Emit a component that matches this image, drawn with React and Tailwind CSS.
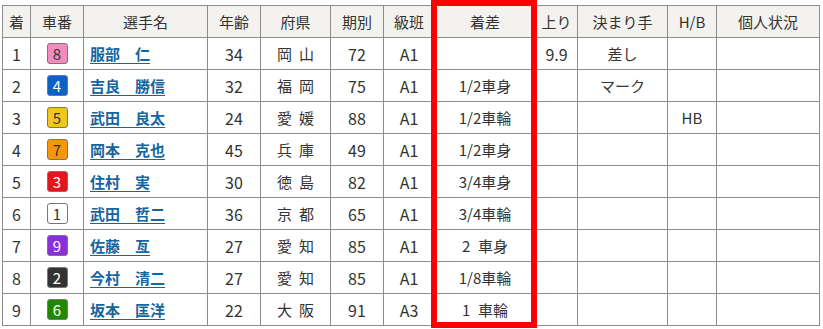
const COLS = [
  { label: '着', w: 28 },
  { label: '車番', w: 53 },
  { label: '選手名', w: 124 },
  { label: '年齢', w: 53 },
  { label: '府県', w: 70 },
  { label: '期別', w: 53 },
  { label: '級班', w: 51 },
  { label: '着差', w: 101 },
  { label: '上り', w: 42 },
  { label: '決まり手', w: 90 },
  { label: 'H/B', w: 49 },
  { label: '個人状況', w: 103 },
];

const BADGE = {
  1: 'bg-white text-[#333]',
  2: 'bg-[#333333] text-white',
  3: 'bg-[#e8141c] text-white',
  4: 'bg-[#0a62c9] text-white',
  5: 'bg-[#f2c71d] text-[#333]',
  6: 'bg-[#1f8a00] text-white',
  7: 'bg-[#f7960c] text-[#333]',
  8: 'bg-[#f28cbf] text-[#333]',
  9: 'bg-[#8a30d8] text-white',
};

const ROWS = [
  { car: 8, name: '服部　仁', age: 34, pref: '岡山', ki: 72, cls: 'A1', diff: '', up: '9.9', kimari: '差し', hb: '' },
  { car: 4, name: '吉良　勝信', age: 32, pref: '福岡', ki: 75, cls: 'A1', diff: '1/2車身', up: '', kimari: 'マーク', hb: '' },
  { car: 5, name: '武田　良太', age: 24, pref: '愛媛', ki: 88, cls: 'A1', diff: '1/2車輪', up: '', kimari: '', hb: 'HB' },
  { car: 7, name: '岡本　克也', age: 45, pref: '兵庫', ki: 49, cls: 'A1', diff: '1/2車身', up: '', kimari: '', hb: '' },
  { car: 3, name: '住村　実', age: 30, pref: '徳島', ki: 82, cls: 'A1', diff: '3/4車身', up: '', kimari: '', hb: '' },
  { car: 1, name: '武田　哲二', age: 36, pref: '京都', ki: 65, cls: 'A1', diff: '3/4車輪', up: '', kimari: '', hb: '' },
  { car: 9, name: '佐藤　亙', age: 27, pref: '愛知', ki: 85, cls: 'A1', diff: '2\u2002車身', up: '', kimari: '', hb: '' },
  { car: 2, name: '今村　清二', age: 27, pref: '愛知', ki: 85, cls: 'A1', diff: '1/8車輪', up: '', kimari: '', hb: '' },
  { car: 6, name: '坂本　匡洋', age: 22, pref: '大阪', ki: 91, cls: 'A3', diff: '1\u2002車輪', up: '', kimari: '', hb: '' },
];

const td = 'border border-[#8c8c8c] h-[32px] p-0 text-center';

export default function App() {
  return (
    <div className="relative w-[823px] h-[329px] bg-white pt-[5px] pl-[2px] text-[15px] text-[#333] font-['Noto_Sans_CJK_JP','Noto_Sans',sans-serif] leading-none">
      <table className="table-fixed border-collapse w-[817px]">
        <colgroup>
          {COLS.map((c) => (
            <col key={c.label} style={{ width: c.w }} />
          ))}
        </colgroup>
        <thead>
          <tr className="bg-[#f3f2ef]">
            {COLS.map((c) => (
              <th key={c.label} className={`${td} font-normal`}>
                {c.label}
              </th>
            ))}
          </tr>
        </thead>
        <tbody>
          {ROWS.map((r, i) => (
            <tr key={r.name}>
              <td className={`${td} text-[16px]`}>{i + 1}</td>
              <td className={td}>
                <span
                  className={`inline-flex items-center justify-center w-[21px] h-[21px] rounded-[3px] border border-[#777] text-[15px] align-middle ${BADGE[r.car]}`}
                >
                  {r.car}
                </span>
              </td>
              <td className={`${td} text-left pl-[6px]`}>
                <a href="#" className="font-bold text-[#16659f] underline underline-offset-[3px]">
                  {r.name}
                </a>
              </td>
              <td className={`${td} text-[16px]`}>{r.age}</td>
              <td className={td}>
                <span className="inline-flex gap-[7px]">
                  <span>{r.pref[0]}</span>
                  <span>{r.pref[1]}</span>
                </span>
              </td>
              <td className={`${td} text-[16px]`}>{r.ki}</td>
              <td className={`${td} text-[16px]`}>{r.cls}</td>
              <td className={td}>{r.diff}</td>
              <td className={`${td} text-[16px]`}>{r.up}</td>
              <td className={td}>{r.kimari}</td>
              <td className={td}>{r.hb}</td>
              <td className={td}></td>
            </tr>
          ))}
        </tbody>
      </table>
      <div className="absolute left-[431px] top-0 w-[106px] h-[328px] border-[6px] border-[#ff0000]" />
    </div>
  );
}
